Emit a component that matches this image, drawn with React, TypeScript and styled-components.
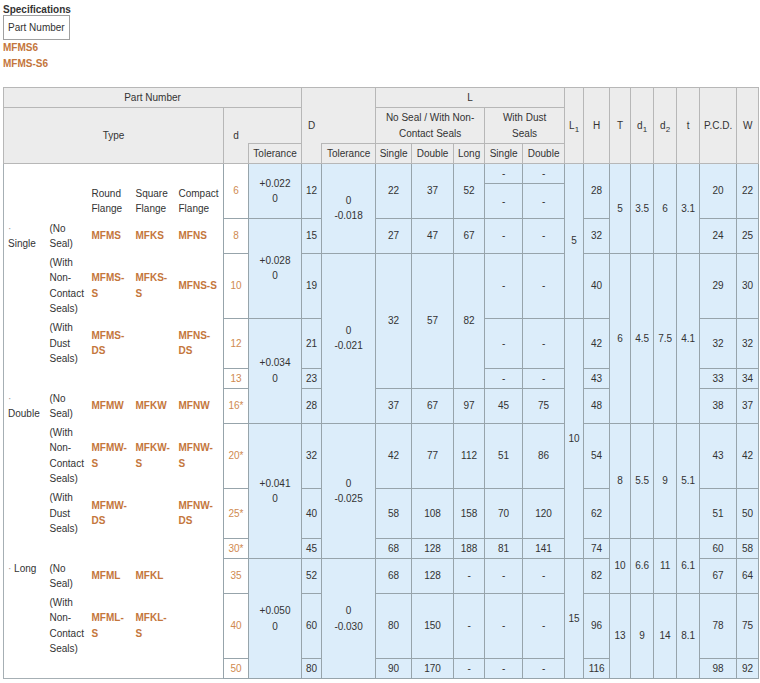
import React from 'react';
import styled, { createGlobalStyle } from 'styled-components';

const GlobalStyle = createGlobalStyle`
  body {
    margin: 0;
    background: #fff;
    font-family: "Liberation Sans", Arial, sans-serif;
    font-size: 10px;
    color: #333;
  }
`;

const Page = styled.div`
  padding: 4px 3px 0;
`;

const Title = styled.div`
  font-weight: bold;
  line-height: 11px;
  color: #333;
`;

const TabBox = styled.div`
  display: inline-block;
  border: 1px solid #a0a0a0;
  padding: 0 4px;
  line-height: 23px;
  color: #333;
`;

const PartLinks = styled.div`
  margin-bottom: 15px;
`;

const PartLink = styled.a`
  display: block;
  color: #c4763c;
  font-weight: bold;
  line-height: 16px;
  text-decoration: none;
`;

const Table = styled.table`
  width: 755px;
  table-layout: fixed;
  border-collapse: collapse;
  border: 1px solid #a6afb4;
  line-height: 15.3px;
  color: #333;
`;

const Col = styled.col<{ $w: number }>`
  width: ${(p) => p.$w}px;
`;

const Th = styled.th<{ $noLeft?: boolean }>`
  background: #ececec;
  border: 1px solid #b7b7b7;
  ${(p) => (p.$noLeft ? 'border-left-style: hidden;' : '')}
  font-weight: normal;
  padding: 2px 1px;
  text-align: center;
  vertical-align: middle;
  color: #333;
`;

const Sub = styled.sub`
  font-size: 8px;
  line-height: 0;
  vertical-align: -3px;
`;

const LeftCell = styled.td`
  border: none;
  background: #fff;
  padding: 2px 3px;
  text-align: left;
  vertical-align: middle;
`;

const TypeLabel = styled(LeftCell)`
  vertical-align: top;
  padding-left: 4px;
`;

const Dot = styled.span`
  color: #999;
`;

const Part = styled(LeftCell)`
  color: #c4763c;
  font-weight: bold;
`;

const DCell = styled.td`
  border: 1px solid #97a4ab;
  background: #fff;
  color: #cf8a4f;
  text-align: center;
  vertical-align: middle;
  padding: 2px 1px;
`;

const Val = styled.td`
  border: 1px solid #97a4ab;
  background: #dcedfa;
  text-align: center;
  vertical-align: middle;
  padding: 2px 1px;
`;

const widths = [43, 42, 44, 43, 48, 25, 53, 20, 54, 36, 42, 31, 38, 42, 19, 26, 21, 23, 23, 23, 37, 22];

const nonContact = (
  <>
    (With
    <br />
    Non-
    <br />
    Contact
    <br />
    Seals)
  </>
);

const dust = (
  <>
    (With
    <br />
    Dust
    <br />
    Seals)
  </>
);

const noSeal = (
  <>
    (No
    <br />
    Seal)
  </>
);

const Two = ({ a, b }: { a: string; b: string }) => (
  <>
    {a}
    <br />
    {b}
  </>
);

export default function App() {
  return (
    <Page>
      <GlobalStyle />
      <Title>Specifications</Title>
      <TabBox>Part Number</TabBox>
      <PartLinks>
        <PartLink href="#">MFMS6</PartLink>
        <PartLink href="#">MFMS-S6</PartLink>
      </PartLinks>

      <Table>
        <colgroup>
          {widths.map((w, i) => (
            <Col key={i} $w={w} />
          ))}
        </colgroup>
        <thead>
          <tr>
            <Th colSpan={7}>Part Number</Th>
            <Th rowSpan={3}>D</Th>
            <Th rowSpan={2} $noLeft />
            <Th colSpan={5}>L</Th>
            <Th rowSpan={3}>
              L<Sub>1</Sub>
            </Th>
            <Th rowSpan={3}>H</Th>
            <Th rowSpan={3}>T</Th>
            <Th rowSpan={3}>
              d<Sub>1</Sub>
            </Th>
            <Th rowSpan={3}>
              d<Sub>2</Sub>
            </Th>
            <Th rowSpan={3}>t</Th>
            <Th rowSpan={3}>P.C.D.</Th>
            <Th rowSpan={3}>W</Th>
          </tr>
          <tr>
            <Th colSpan={5} rowSpan={2}>Type</Th>
            <Th rowSpan={2}>d</Th>
            <Th $noLeft />
            <Th colSpan={3}>
              <Two a="No Seal / With Non-" b="Contact Seals" />
            </Th>
            <Th colSpan={2}>
              <Two a="With Dust" b="Seals" />
            </Th>
          </tr>
          <tr>
            <Th>Tolerance</Th>
            <Th>Tolerance</Th>
            <Th>Single</Th>
            <Th>Double</Th>
            <Th>Long</Th>
            <Th>Single</Th>
            <Th>Double</Th>
          </tr>
        </thead>
        <tbody>
          {/* d = 6, upper half */}
          <tr>
            <LeftCell colSpan={5} />
            <DCell rowSpan={2}>6</DCell>
            <Val rowSpan={2}><Two a="+0.022" b="0" /></Val>
            <Val rowSpan={2}>12</Val>
            <Val rowSpan={3}><Two a="0" b="-0.018" /></Val>
            <Val rowSpan={2}>22</Val>
            <Val rowSpan={2}>37</Val>
            <Val rowSpan={2}>52</Val>
            <Val>-</Val>
            <Val>-</Val>
            <Val rowSpan={4}>5</Val>
            <Val rowSpan={2}>28</Val>
            <Val rowSpan={3}>5</Val>
            <Val rowSpan={3}>3.5</Val>
            <Val rowSpan={3}>6</Val>
            <Val rowSpan={3}>3.1</Val>
            <Val rowSpan={2}>20</Val>
            <Val rowSpan={2}>22</Val>
          </tr>
          <tr>
            <LeftCell colSpan={2} />
            <LeftCell><Two a="Round" b="Flange" /></LeftCell>
            <LeftCell><Two a="Square" b="Flange" /></LeftCell>
            <LeftCell><Two a="Compact" b="Flange" /></LeftCell>
            <Val>-</Val>
            <Val>-</Val>
          </tr>
          {/* d = 8 */}
          <tr>
            <TypeLabel>
              <Dot>·</Dot>
              <br />
              Single
            </TypeLabel>
            <LeftCell>{noSeal}</LeftCell>
            <Part>MFMS</Part>
            <Part>MFKS</Part>
            <Part>MFNS</Part>
            <DCell>8</DCell>
            <Val rowSpan={2}><Two a="+0.028" b="0" /></Val>
            <Val>15</Val>
            <Val>27</Val>
            <Val>47</Val>
            <Val>67</Val>
            <Val>-</Val>
            <Val>-</Val>
            <Val>32</Val>
            <Val>24</Val>
            <Val>25</Val>
          </tr>
          {/* d = 10 */}
          <tr>
            <LeftCell />
            <LeftCell>{nonContact}</LeftCell>
            <Part><Two a="MFMS-" b="S" /></Part>
            <Part><Two a="MFKS-" b="S" /></Part>
            <Part>MFNS-S</Part>
            <DCell>10</DCell>
            <Val>19</Val>
            <Val rowSpan={4}><Two a="0" b="-0.021" /></Val>
            <Val rowSpan={3}>32</Val>
            <Val rowSpan={3}>57</Val>
            <Val rowSpan={3}>82</Val>
            <Val>-</Val>
            <Val>-</Val>
            <Val>40</Val>
            <Val rowSpan={4}>6</Val>
            <Val rowSpan={4}>4.5</Val>
            <Val rowSpan={4}>7.5</Val>
            <Val rowSpan={4}>4.1</Val>
            <Val>29</Val>
            <Val>30</Val>
          </tr>
          {/* d = 12 */}
          <tr>
            <LeftCell />
            <LeftCell>{dust}</LeftCell>
            <Part><Two a="MFMS-" b="DS" /></Part>
            <LeftCell />
            <Part><Two a="MFNS-" b="DS" /></Part>
            <DCell>12</DCell>
            <Val rowSpan={3}><Two a="+0.034" b="0" /></Val>
            <Val>21</Val>
            <Val>-</Val>
            <Val>-</Val>
            <Val rowSpan={6}>10</Val>
            <Val>42</Val>
            <Val>32</Val>
            <Val>32</Val>
          </tr>
          {/* d = 13 */}
          <tr>
            <LeftCell colSpan={5} />
            <DCell>13</DCell>
            <Val>23</Val>
            <Val>-</Val>
            <Val>-</Val>
            <Val>43</Val>
            <Val>33</Val>
            <Val>34</Val>
          </tr>
          {/* d = 16* */}
          <tr>
            <TypeLabel>
              <Dot>·</Dot>
              <br />
              Double
            </TypeLabel>
            <LeftCell>{noSeal}</LeftCell>
            <Part>MFMW</Part>
            <Part>MFKW</Part>
            <Part>MFNW</Part>
            <DCell>16*</DCell>
            <Val>28</Val>
            <Val>37</Val>
            <Val>67</Val>
            <Val>97</Val>
            <Val>45</Val>
            <Val>75</Val>
            <Val>48</Val>
            <Val>38</Val>
            <Val>37</Val>
          </tr>
          {/* d = 20* */}
          <tr>
            <LeftCell />
            <LeftCell>{nonContact}</LeftCell>
            <Part><Two a="MFMW-" b="S" /></Part>
            <Part><Two a="MFKW-" b="S" /></Part>
            <Part><Two a="MFNW-" b="S" /></Part>
            <DCell>20*</DCell>
            <Val rowSpan={3}><Two a="+0.041" b="0" /></Val>
            <Val>32</Val>
            <Val rowSpan={3}><Two a="0" b="-0.025" /></Val>
            <Val>42</Val>
            <Val>77</Val>
            <Val>112</Val>
            <Val>51</Val>
            <Val>86</Val>
            <Val>54</Val>
            <Val rowSpan={2}>8</Val>
            <Val rowSpan={2}>5.5</Val>
            <Val rowSpan={2}>9</Val>
            <Val rowSpan={2}>5.1</Val>
            <Val>43</Val>
            <Val>42</Val>
          </tr>
          {/* d = 25* */}
          <tr>
            <LeftCell />
            <LeftCell>{dust}</LeftCell>
            <Part><Two a="MFMW-" b="DS" /></Part>
            <LeftCell />
            <Part><Two a="MFNW-" b="DS" /></Part>
            <DCell>25*</DCell>
            <Val>40</Val>
            <Val>58</Val>
            <Val>108</Val>
            <Val>158</Val>
            <Val>70</Val>
            <Val>120</Val>
            <Val>62</Val>
            <Val>51</Val>
            <Val>50</Val>
          </tr>
          {/* d = 30* */}
          <tr>
            <LeftCell colSpan={5} />
            <DCell>30*</DCell>
            <Val>45</Val>
            <Val>68</Val>
            <Val>128</Val>
            <Val>188</Val>
            <Val>81</Val>
            <Val>141</Val>
            <Val>74</Val>
            <Val rowSpan={2}>10</Val>
            <Val rowSpan={2}>6.6</Val>
            <Val rowSpan={2}>11</Val>
            <Val rowSpan={2}>6.1</Val>
            <Val>60</Val>
            <Val>58</Val>
          </tr>
          {/* d = 35 */}
          <tr>
            <TypeLabel>
              <Dot>·</Dot> Long
            </TypeLabel>
            <LeftCell>{noSeal}</LeftCell>
            <Part>MFML</Part>
            <Part>MFKL</Part>
            <LeftCell />
            <DCell>35</DCell>
            <Val rowSpan={3}><Two a="+0.050" b="0" /></Val>
            <Val>52</Val>
            <Val rowSpan={3}><Two a="0" b="-0.030" /></Val>
            <Val>68</Val>
            <Val>128</Val>
            <Val>-</Val>
            <Val>-</Val>
            <Val>-</Val>
            <Val rowSpan={3}>15</Val>
            <Val>82</Val>
            <Val>67</Val>
            <Val>64</Val>
          </tr>
          {/* d = 40 */}
          <tr>
            <LeftCell />
            <LeftCell>{nonContact}</LeftCell>
            <Part><Two a="MFML-" b="S" /></Part>
            <Part><Two a="MFKL-" b="S" /></Part>
            <LeftCell />
            <DCell>40</DCell>
            <Val>60</Val>
            <Val>80</Val>
            <Val>150</Val>
            <Val>-</Val>
            <Val>-</Val>
            <Val>-</Val>
            <Val>96</Val>
            <Val rowSpan={2}>13</Val>
            <Val rowSpan={2}>9</Val>
            <Val rowSpan={2}>14</Val>
            <Val rowSpan={2}>8.1</Val>
            <Val>78</Val>
            <Val>75</Val>
          </tr>
          {/* d = 50 */}
          <tr>
            <LeftCell colSpan={5} />
            <DCell>50</DCell>
            <Val>80</Val>
            <Val>90</Val>
            <Val>170</Val>
            <Val>-</Val>
            <Val>-</Val>
            <Val>-</Val>
            <Val>116</Val>
            <Val>98</Val>
            <Val>92</Val>
          </tr>
        </tbody>
      </Table>
    </Page>
  );
}
